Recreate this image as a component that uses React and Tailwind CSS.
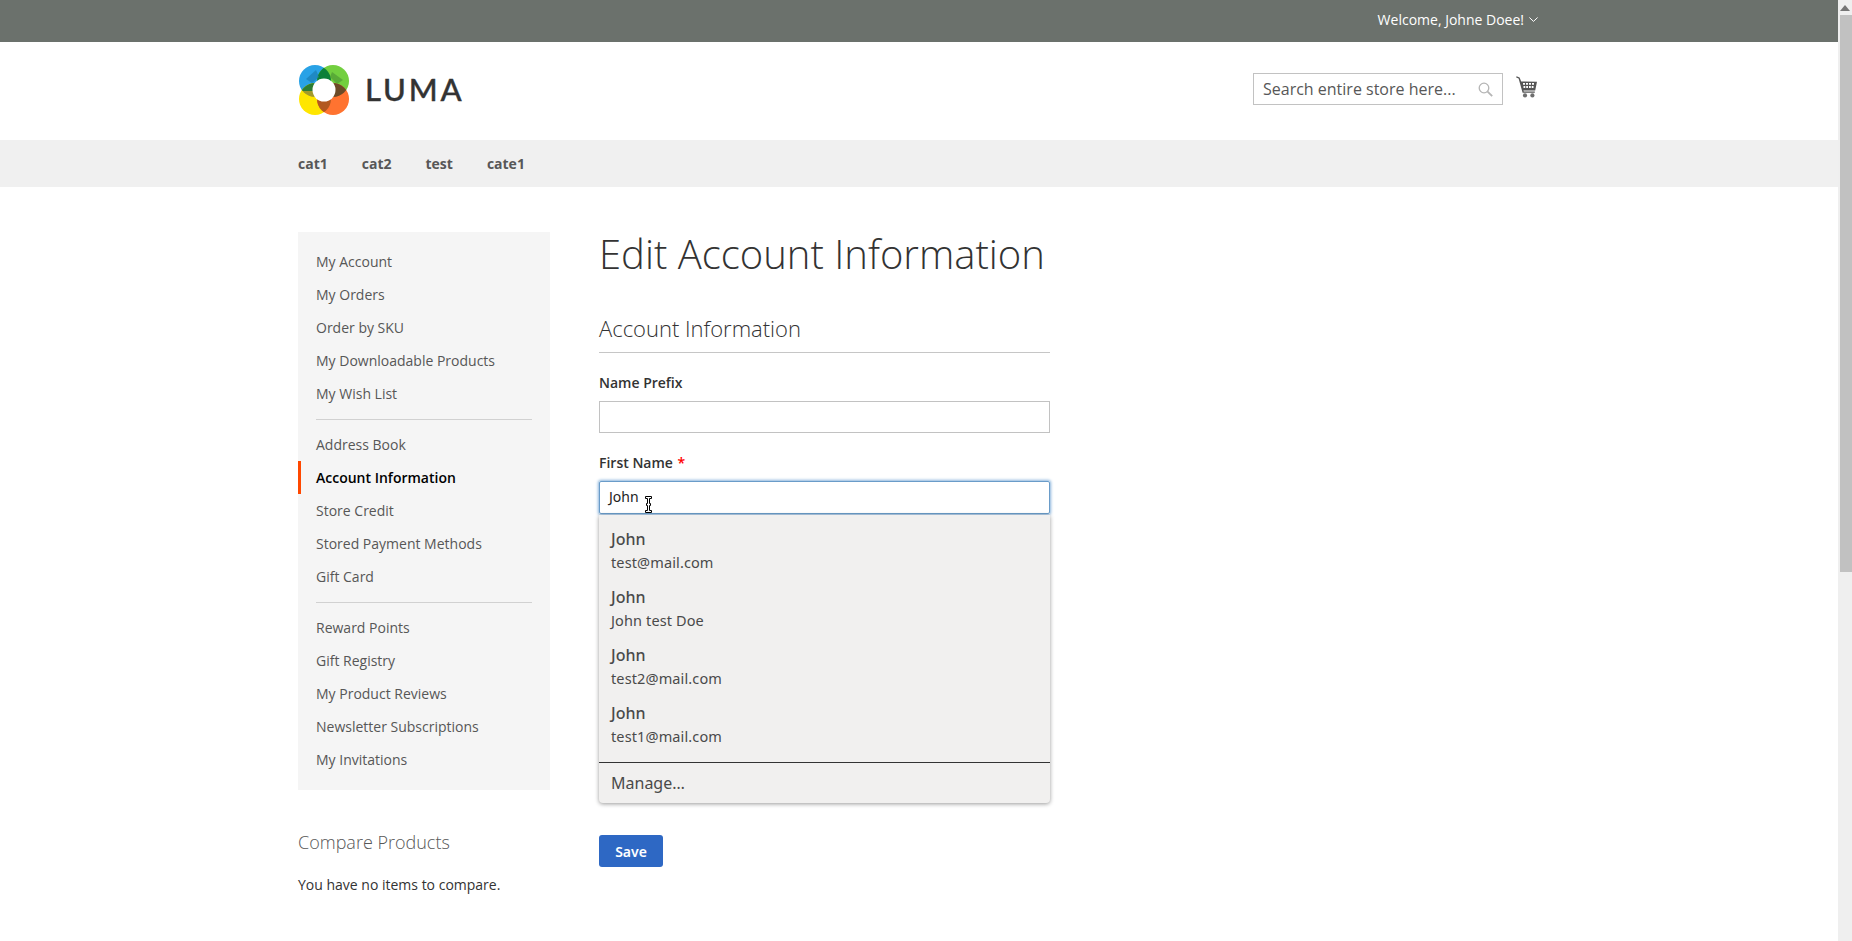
import React from 'react';

const accountLinks = ['My Account', 'My Orders', 'Order by SKU', 'My Downloadable Products', 'My Wish List'];
const infoLinks = ['Address Book', 'Account Information', 'Store Credit', 'Stored Payment Methods', 'Gift Card'];
const otherLinks = ['Reward Points', 'Gift Registry', 'My Product Reviews', 'Newsletter Subscriptions', 'My Invitations'];
const suggestions = ['test@mail.com', 'John test Doe', 'test2@mail.com', 'test1@mail.com'];
const navItems = ['cat1', 'cat2', 'test', 'cate1'];

function Logo() {
  return (
    <svg width="50" height="50" viewBox="0 0 50 50" className="block">
      <defs>
        <clipPath id="clipBlue"><circle cx="16" cy="16" r="16" /></clipPath>
        <clipPath id="clipGreen"><circle cx="34" cy="16" r="16" /></clipPath>
        <clipPath id="clipYellow"><circle cx="16" cy="34" r="16" /></clipPath>
      </defs>
      <circle cx="16" cy="16" r="16" fill="#29a2e6" />
      <circle cx="34" cy="16" r="16" fill="#72cf3f" />
      <circle cx="16" cy="34" r="16" fill="#ffe600" />
      <circle cx="34" cy="34" r="16" fill="#ff7330" />
      <g clipPath="url(#clipBlue)">
        <circle cx="34" cy="16" r="16" fill="#0c8039" />
      </g>
      <g clipPath="url(#clipGreen)">
        <circle cx="34" cy="34" r="16" fill="#6b4a26" />
      </g>
      <g clipPath="url(#clipYellow)">
        <circle cx="34" cy="34" r="16" fill="#b2581f" />
        <g clipPath="url(#clipBlue)">
          <rect x="0" y="18" width="25" height="8" fill="#2c7d33" />
          <rect x="0" y="26" width="25" height="8" fill="#a39a2a" />
        </g>
      </g>
      <path d="M7 14 L17 5 L20 12 L13 18 Z" fill="#1b7fb3" opacity="0.7" />
      <path d="M33 7 L44 15 L38 19 L31 12 Z" fill="#4f9a35" opacity="0.7" />
      <circle cx="25" cy="25" r="11.5" fill="#ffffff" />
    </svg>
  );
}

function CartIcon() {
  return (
    <svg width="22" height="22" viewBox="0 0 22 22" className="block" fill="#6e6e6e">
      <path d="M0.5 0.3 L3.6 1.4 L5.2 5.4 L21 5.8 L19.2 14.4 L7.4 14.4 L7.8 15.6 L18.8 15.6 L18.8 16.8 L6.6 16.8 L2.6 2.4 L0.2 1.4 Z" fill="#555555" />
      <path d="M7 7 H9 V8.8 H7 Z M10 7 H12 V8.8 H10 Z M13 7 H15 V8.8 H13 Z M16 7 H18 V8.8 H16 Z M7.5 10 H9.3 V12 H7.5 Z M10.2 10 H12 V12 H10.2 Z M13 10 H14.8 V12 H13 Z M15.7 10 H17.5 V12 H15.7 Z" fill="#ffffff" />
      <circle cx="9" cy="19.4" r="2.1" />
      <circle cx="16.4" cy="19.4" r="2.1" />
    </svg>
  );
}

function TextCursor() {
  return (
    <svg width="9" height="17" viewBox="0 0 9 17" className="absolute left-[45px] top-[15px]">
      <path
        d="M1.5 0.5 H7.5 V2.5 H5.5 V7.5 H6.5 V9.5 H5.5 V14.5 H7.5 V16.5 H1.5 V14.5 H3.5 V9.5 H2.5 V7.5 H3.5 V2.5 H1.5 Z"
        fill="#ffffff"
        stroke="#000000"
        strokeWidth="1"
      />
    </svg>
  );
}

function SidebarGroup({ links }) {
  return (
    <ul>
      {links.map((link) => (
        <li
          key={link}
          className={
            link === 'Account Information'
              ? 'h-[33px] leading-[33px] border-l-[3px] border-[#ff4800] pl-[15px] font-semibold text-black'
              : 'h-[33px] leading-[33px] pl-[18px] text-[#575757]'
          }
        >
          {link}
        </li>
      ))}
    </ul>
  );
}

function App() {
  return (
    <div className="flex h-[941px] w-[1852px] overflow-hidden bg-white text-[14px] text-[#333333] font-['Open_Sans',sans-serif]">
      <div className="w-[1838px] shrink-0">
        <div className="h-[42px] bg-[#6b716c]">
          <div className="flex h-[38px] w-[1240px] ml-[298px] items-center justify-end text-white">
            <span>Welcome, Johne Doee!</span>
            <svg width="9" height="5" viewBox="0 0 9 5" className="ml-[5px] mt-[1px]" fill="none" stroke="#ffffff" strokeWidth="1">
              <path d="M0.4 0.5 L4.5 4.4 L8.6 0.5" />
            </svg>
          </div>
        </div>

        <div className="h-[98px] ml-[298px] w-[1240px] flex items-start justify-between">
          <div className="flex items-center mt-[22px] ml-px">
            <Logo />
            <span className="ml-[16px] -mt-px text-[31px] leading-[52px] font-medium tracking-[2.8px] text-[#333333] font-['Lato',sans-serif] [-webkit-text-stroke:0.4px_#333333]">LUMA</span>
          </div>
          <div className="flex items-start mt-[31px]">
            <div className="w-[250px] h-[32px] border border-[#c2c2c2] flex items-center justify-between pl-[9px] pr-[9px] text-[16px] text-[#575757]">
              <span>Search entire store here...</span>
              <svg width="15" height="15" viewBox="0 0 15 15" fill="none" stroke="#b5b5b5" strokeWidth="1.3">
                <circle cx="6" cy="6" r="4.8" />
                <path d="M9.6 9.6 L14.2 14.2" strokeWidth="1.8" />
              </svg>
            </div>
            <div className="ml-[13px] mt-[3px]">
              <CartIcon />
            </div>
          </div>
        </div>

        <div className="h-[47px] bg-[#f0f0f0]">
          <div className="ml-[298px] flex gap-[34px] h-full items-center font-bold text-[#575757]">
            {navItems.map((item) => (
              <span key={item}>{item}</span>
            ))}
          </div>
        </div>

        <div className="ml-[298px] flex mt-[45px]">
          <div className="w-[252px] shrink-0">
            <div className="bg-[#f5f5f5] h-[558px] pt-[13px]">
              <SidebarGroup links={accountLinks} />
              <div className="h-px bg-[#d1d1d1] mx-[18px] mt-[9px] mb-[8px]" />
              <SidebarGroup links={infoLinks} />
              <div className="h-px bg-[#d1d1d1] mx-[18px] mt-[9px] mb-[8px]" />
              <SidebarGroup links={otherLinks} />
            </div>
            <div className="mt-[38px] text-[18px] leading-[28px] font-light text-[#575757]">Compare Products</div>
            <div className="mt-[19px] leading-[20px]">You have no items to compare.</div>
          </div>

          <div className="ml-[49px] w-[451px]">
            <h1 className="text-[40px] leading-[50px] font-light -mt-[3px]">Edit Account Information</h1>
            <div className="mt-[34px] h-[40px] border-b border-[#c6c6c6] text-[22px] leading-[30px] font-light">Account Information</div>
            <div className="mt-[20px] font-semibold leading-[20px]">Name Prefix</div>
            <div className="mt-[8px] h-[32px] border border-[#c2c2c2]" />
            <div className="mt-[20px] font-semibold leading-[20px]">
              First Name <span className="ml-px text-[#ff0000]">*</span>
            </div>
            <div className="relative mt-[8px]">
              <div className="h-[33px] border border-[#6a9cc9] rounded-[2px] shadow-[0_0_3px_1px_#8ab4dc] pl-[9px] leading-[30px] text-[#222222] font-['Noto_Sans',sans-serif]">
                John
              </div>
              <TextCursor />
              <div className="absolute left-0 right-0 top-[34px] h-[288px] bg-[#f1f0ef] rounded-b-[4px] shadow-[0_1px_4px_rgba(0,0,0,0.4)] font-['Noto_Sans',sans-serif] text-[#4a4a4a]">
                <div className="h-[247px] pt-[7px]">
                  {suggestions.map((text) => (
                    <div key={text} className="h-[58px] pl-[12px] pt-[5px]">
                      <div className="text-[16px] leading-[24px] font-medium">John</div>
                      <div className="text-[14.5px] leading-[23px] tracking-[0.12px]">{text}</div>
                    </div>
                  ))}
                </div>
                <div className="h-px bg-[#333333]" />
                <div className="pl-[12px] pt-[8px] text-[16px] leading-[24px]">Manage…</div>
              </div>
            </div>
            <button className="mt-[321px] block w-[64px] h-[32px] bg-[#2e68c4] rounded-[3px] text-white font-semibold font-['Noto_Sans',sans-serif]">Save</button>
          </div>
        </div>
      </div>

      <div className="w-[14px] h-full bg-[#efefef] relative">
        <svg width="10" height="6" viewBox="0 0 10 6" className="absolute left-[2px] top-[5px]" fill="#757575">
          <path d="M5 0 L10 6 H0 Z" />
        </svg>
        <div className="absolute left-[2px] right-0 top-[15px] h-[557px] bg-[#c1c1c1]" />
      </div>
    </div>
  );
}

export default App;
